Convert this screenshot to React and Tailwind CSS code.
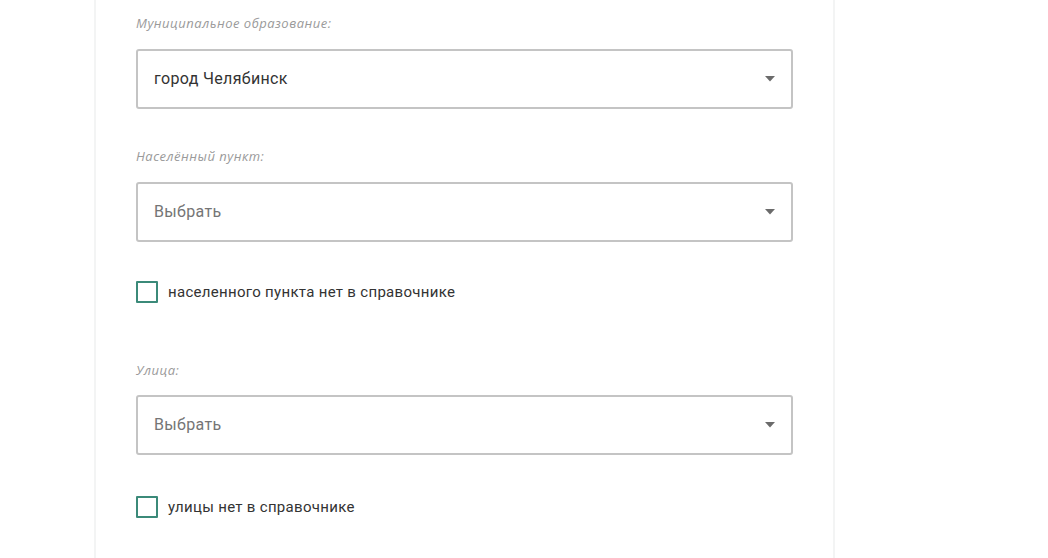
import React from "react";

function Label({ children }) {
  return (
    <div className="h-4 font-['Open_Sans',sans-serif] text-[13px] leading-4 italic tracking-[0.5px] text-[#9a9a9a]">
      {children}
    </div>
  );
}

function Select({ value, placeholder }) {
  return (
    <div className="flex h-[60px] w-[657px] items-center justify-between rounded-[3px] border-2 border-[#c4c4c4] bg-white pl-4 pr-[16px]">
      <span
        className={
          "font-['Roboto',sans-serif] text-[16px] tracking-[0.35px] " +
          (value ? "text-[#333333]" : "text-[#757575]")
        }
      >
        {value || placeholder}
      </span>
      <svg width="10" height="6" viewBox="0 0 10 6">
        <path d="M0 0 L10 0 L5 5.5 Z" fill="#6b6b6b" />
      </svg>
    </div>
  );
}

function Check({ children }) {
  return (
    <div className="flex items-center">
      <div className="h-[22px] w-[22px] rounded-[1px] border-2 border-[#3b8a79] bg-white" />
      <span className="ml-[10px] font-['Roboto',sans-serif] text-[15px] tracking-[0.3px] text-[#333333]">
        {children}
      </span>
    </div>
  );
}

export default function App() {
  return (
    <div className="flex h-[558px] w-full bg-white">
      <div className="ml-[94px] h-[558px] w-[741px] border-x-2 border-[#f3f4f4] bg-white pl-[40px] pt-[15px]">
        <Label>Муниципальное образование:</Label>
        <div className="mt-[18px]">
          <Select value="город Челябинск" />
        </div>
        <div className="mt-[39px]">
          <Label>Населённый пункт:</Label>
        </div>
        <div className="mt-[18px]">
          <Select placeholder="Выбрать" />
        </div>
        <div className="mt-[39px]">
          <Check>населенного пункта нет в справочнике</Check>
        </div>
        <div className="mt-[58px]">
          <Label>Улица:</Label>
        </div>
        <div className="mt-[17px]">
          <Select placeholder="Выбрать" />
        </div>
        <div className="mt-[41px]">
          <Check>улицы нет в справочнике</Check>
        </div>
      </div>
    </div>
  );
}
